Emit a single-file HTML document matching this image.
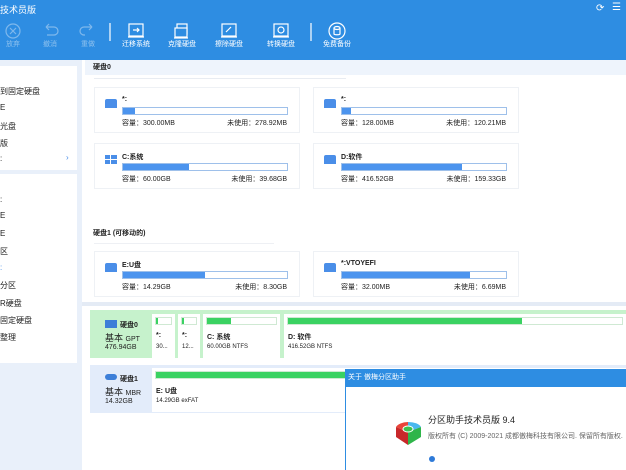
<!DOCTYPE html>
<html><head><meta charset="utf-8"><style>
*{margin:0;padding:0;box-sizing:border-box}
body{width:626px;height:470px;overflow:hidden;background:#e9f0fa;font-family:"Liberation Sans","Noto Sans CJK SC",sans-serif;position:relative;font-size:8px;color:#222}
.a{position:absolute}
.top{left:0;top:0;width:626px;height:60px;background:#2e8de2}
.tb{color:#fff;font-size:7px;text-align:center;width:44px}
.tb.d{color:#8cc0ee}
.side{background:#fff}
.si{left:0;font-size:8px;color:#222}
.card{background:#fff;border:1px solid #eef1f5;width:206px;height:46px}
.card .ic{left:10px;top:11px;width:12px;height:9px;background:#4a8ee8;border-radius:2px 2px 0 0}
.card .nm{left:27px;top:8px;font-weight:bold;font-size:7px}
.card .bar{left:27px;top:19px;width:166px;height:8px;border:1px solid #9ec0ea;background:#fff}
.card .bar i{display:block;height:6px;background:#4c94ee}
.card .c1{left:27px;top:30px;font-size:7px}
.card .c2{right:12px;top:30px;font-size:7px}
.pb{background:#fff;height:44px;top:4px}
.pb .g{position:absolute;left:3px;top:3px;right:3px;height:8px;border:1px solid #cfe9d3;background:#fff}
.pb .g i{display:block;height:6px;background:#3ad262}
.pb .t1{position:absolute;left:4px;top:18px;font-weight:bold;font-size:7px}
.pb .t2{position:absolute;left:4px;top:30px;font-size:6px}
</style></head><body>
<div class="a top"></div>
<div class="a" style="left:0;top:3px;color:#fff;font-size:9px">技术员版</div>
<div class="a" style="left:596px;top:3px;color:#fff;font-size:10px">⟳</div>
<div class="a" style="left:612px;top:2px;color:#fff;font-size:10px">☰</div>
<!-- toolbar icons -->
<svg class="a" style="left:0;top:20px" width="360" height="24" fill="none" stroke-width="1.2">
<g stroke="#7fb8ec"><circle cx="13" cy="11" r="7"/><path d="M10 8l6 6M16 8l-6 6"/>
<path d="M46 7h8a4 4 0 0 1 0 8h-7M46 7l3-3M46 7l3 3"/>
<path d="M92 7h-8a4 4 0 0 0 0 8h1M92 7l-3-3M92 7l-3 3"/></g>
<g stroke="#fff"><path d="M110 3v18M311 3v18"/>
<rect x="129" y="4" width="14" height="12"/><path d="M128 17h16M133 10h6M137 8l2 2-2 2"/>
<rect x="177" y="4" width="10" height="10"/><rect x="175" y="8" width="12" height="9" fill="#2e8de2"/><path d="M174 18h14"/>
<rect x="222" y="4" width="14" height="12"/><path d="M221 17h16M226 12l5-5"/>
<rect x="274" y="4" width="14" height="12"/><path d="M273 17h16"/><circle cx="281" cy="10" r="3"/>
<circle cx="337" cy="11" r="8"/><ellipse cx="337" cy="8" rx="3" ry="1.5"/><path d="M334 8v6c0 1 6 1 6 0V8"/></g>
</svg>
<div class="a tb d" style="left:-9px;top:39px">放弃</div>
<div class="a tb d" style="left:28px;top:39px">撤消</div>
<div class="a tb d" style="left:66px;top:39px">重做</div>
<div class="a tb" style="left:114px;top:39px">迁移系统</div>
<div class="a tb" style="left:160px;top:39px">克隆硬盘</div>
<div class="a tb" style="left:207px;top:39px">擦除硬盘</div>
<div class="a tb" style="left:259px;top:39px">转换硬盘</div>
<div class="a tb" style="left:315px;top:39px">免费备份</div>
<!-- sidebar -->
<div class="a side" style="left:0;top:66px;width:77px;height:104px"></div>
<div class="a side" style="left:0;top:174px;width:77px;height:189px"></div>
<div class="a si" style="top:86px">到固定硬盘</div>
<div class="a si" style="top:103px">E</div>
<div class="a si" style="top:121px">光盘</div>
<div class="a si" style="top:138px">版</div>
<div class="a si" style="top:154px">:</div>
<div class="a si" style="left:66px;top:153px;color:#4a8ee8">›</div>
<div class="a si" style="top:195px">:</div>
<div class="a si" style="top:211px">E</div>
<div class="a si" style="top:229px">E</div>
<div class="a si" style="top:246px">区</div>
<div class="a si" style="top:263px;color:#4a8ee8">:</div>
<div class="a si" style="top:280px">分区</div>
<div class="a si" style="top:298px">R硬盘</div>
<div class="a si" style="top:315px">固定硬盘</div>
<div class="a si" style="top:332px">整理</div>
<!-- main -->
<div class="a" style="left:82px;top:60px;width:544px;height:242px;background:#fff"></div>
<div class="a" style="left:85px;top:60px;width:541px;height:15px;background:#eef4fc"></div>
<div class="a" style="left:93px;top:62px;font-weight:bold;font-size:7px">硬盘0</div>
<div class="a" style="left:94px;top:78px;width:252px;height:1px;background:#e8ecf2"></div>
<div class="a card" style="left:94px;top:87px"><div class="a ic"></div><div class="a nm">*:</div><div class="a bar"><i style="width:12px"></i></div><div class="a c1">容量：300.00MB</div><div class="a c2">未使用：278.92MB</div></div>
<div class="a card" style="left:313px;top:87px"><div class="a ic"></div><div class="a nm">*:</div><div class="a bar"><i style="width:9px"></i></div><div class="a c1">容量：128.00MB</div><div class="a c2">未使用：120.21MB</div></div>
<div class="a card" style="left:94px;top:143px"><div class="a ic" style="background:none"><svg width="12" height="10"><path d="M0 0h5v4H0zM6 0h6v4H6zM0 5h5v4H0zM6 5h6v4H6z" fill="#4a8ee8"/></svg></div><div class="a nm">C:系统</div><div class="a bar"><i style="width:66px"></i></div><div class="a c1">容量：60.00GB</div><div class="a c2">未使用：39.68GB</div></div>
<div class="a card" style="left:313px;top:143px"><div class="a ic"></div><div class="a nm">D:软件</div><div class="a bar"><i style="width:120px"></i></div><div class="a c1">容量：416.52GB</div><div class="a c2">未使用：159.33GB</div></div>
<div class="a" style="left:93px;top:228px;font-weight:bold;font-size:7px">硬盘1 (可移动的)</div>
<div class="a" style="left:94px;top:243px;width:180px;height:1px;background:#eef0f4"></div>
<div class="a card" style="left:94px;top:251px"><div class="a ic"></div><div class="a nm">E:U盘</div><div class="a bar"><i style="width:82px"></i></div><div class="a c1">容量：14.29GB</div><div class="a c2">未使用：8.30GB</div></div>
<div class="a card" style="left:313px;top:251px"><div class="a ic"></div><div class="a nm">*:VTOYEFI</div><div class="a bar"><i style="width:128px"></i></div><div class="a c1">容量：32.00MB</div><div class="a c2">未使用：6.69MB</div></div>
<div class="a" style="left:82px;top:302px;width:544px;height:4px;background:#e4ebf5"></div>
<div class="a" style="left:82px;top:306px;width:544px;height:164px;background:#fff"></div>
<!-- disk map -->
<div class="a" style="left:90px;top:310px;width:536px;height:48px;background:#c6f2cc"></div>
<div class="a" style="left:105px;top:320px;width:12px;height:8px;background:#3d7fd8"></div>
<div class="a" style="left:120px;top:320px;font-weight:bold;font-size:7px">硬盘0</div>
<div class="a" style="left:105px;top:331px;font-size:9px">基本 <span style="font-size:7px">GPT</span></div>
<div class="a" style="left:105px;top:344px;font-size:7px">476.94GB</div>
<div class="a pb" style="left:152px;top:314px;width:23px"><div class="g"><i style="width:2px"></i></div><div class="t1">*:</div><div class="t2">30...</div></div>
<div class="a pb" style="left:178px;top:314px;width:22px"><div class="g"><i style="width:2px"></i></div><div class="t1">*:</div><div class="t2">12...</div></div>
<div class="a pb" style="left:203px;top:314px;width:77px"><div class="g"><i style="width:24px"></i></div><div class="t1">C: 系统</div><div class="t2">60.00GB NTFS</div></div>
<div class="a pb" style="left:284px;top:314px;width:342px"><div class="g"><i style="width:234px"></i></div><div class="t1">D: 软件</div><div class="t2">416.52GB NTFS</div></div>
<div class="a" style="left:90px;top:365px;width:536px;height:48px;background:#e3ecfa"></div>
<div class="a" style="left:105px;top:374px;width:12px;height:6px;background:#3d7fd8;border-radius:3px"></div>
<div class="a" style="left:120px;top:374px;font-weight:bold;font-size:7px">硬盘1</div>
<div class="a" style="left:105px;top:385px;font-size:9px">基本 <span style="font-size:7px">MBR</span></div>
<div class="a" style="left:105px;top:398px;font-size:7px">14.32GB</div>
<div class="a pb" style="left:152px;top:368px;width:474px"><div class="g"><i style="width:200px"></i></div><div class="t1">E: U盘</div><div class="t2">14.29GB exFAT</div></div>
<!-- dialog -->
<div class="a" style="left:345px;top:369px;width:281px;height:101px;background:#fff;border-left:1px solid #2e8de2"></div>
<div class="a" style="left:346px;top:369px;width:280px;height:18px;background:#2e8de2;color:#fff;font-size:7px;line-height:18px;padding-left:2px">关于 傲梅分区助手</div>
<svg class="a" style="left:393px;top:419px" width="30" height="27"><path d="M15 13L3 8A13 7 0 0 1 15 3z" fill="#e8443a"/><path d="M15 13V3A13 7 0 0 1 28 8z" fill="#4ab8ef"/><path d="M15 13L28 8V18L15 26z" fill="#2fb54a"/><path d="M15 13L3 8V18L15 26z" fill="#c8282a"/><ellipse cx="15" cy="10" rx="5" ry="3" fill="#3ac24f" stroke="#fff"/></svg>
<div class="a" style="left:428px;top:413px;font-size:9px">分区助手技术员版 9.4</div>
<div class="a" style="left:428px;top:431px;font-size:7px;color:#666">版权所有 (C) 2009-2021 成都傲梅科技有限公司. 保留所有版权.</div>
<div class="a" style="left:429px;top:456px;width:6px;height:6px;background:#2e7ad8;border-radius:50%"></div>
</body></html>
